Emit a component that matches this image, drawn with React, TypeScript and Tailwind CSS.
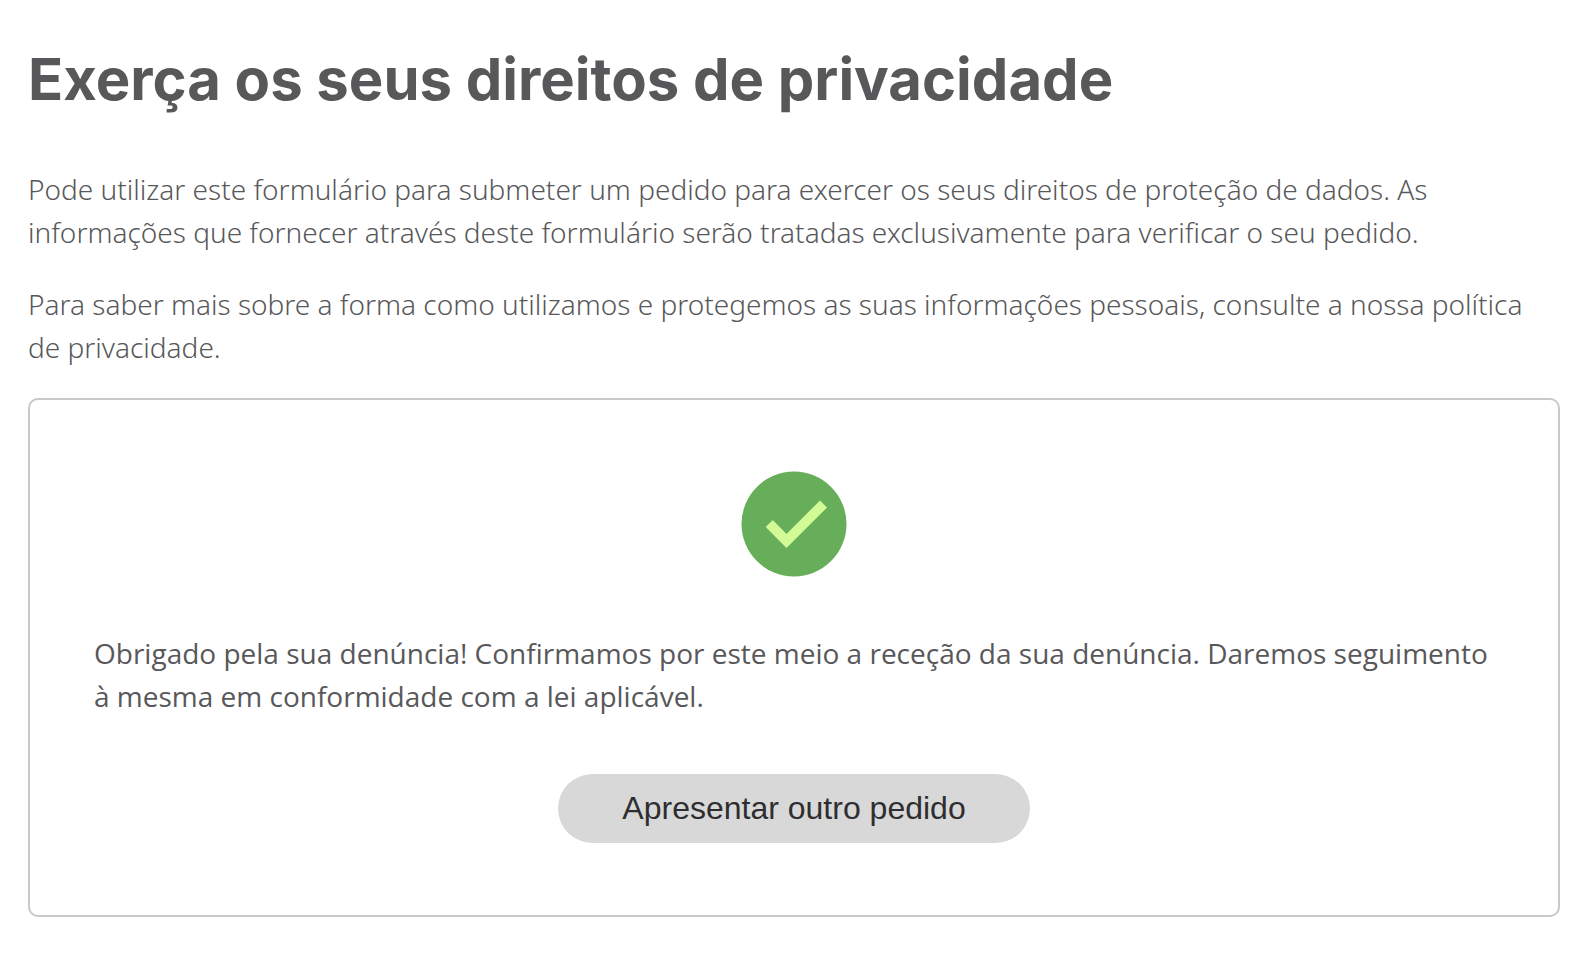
function CheckBadge() {
    return (
        <svg className="size-[106px]" viewBox="0 0 106 106" role="img" aria-label="Sucesso">
            <circle cx="53" cy="53" r="52.5" fill="#67ae5b" />
            <path d="M28.2 52.5 L45.5 70 L82.5 33" fill="none" stroke="#d2fb96" strokeWidth="10" />
        </svg>
    );
}

export default function App() {
    return (
        <main className="px-7 pt-11 pb-16 font-['Open_Sans',sans-serif] text-[#58585a]">
            <h1 className="font-[Inter,sans-serif] text-[58px] leading-[70px] font-bold">
                Exerça os seus direitos de privacidade
            </h1>
            <div className="mt-[54px] space-y-[29px] font-['Noto_Sans',sans-serif] text-[28px] leading-[43px] font-[350]">
                <p>
                    Pode utilizar este formulário para submeter um pedido para exercer os seus direitos de proteção de dados. As
                    informações que fornecer através deste formulário serão tratadas exclusivamente para verificar o seu pedido.
                </p>
                <p>
                    Para saber mais sobre a forma como utilizamos e protegemos as suas informações pessoais, consulte a nossa política
                    {" "}de&nbsp;privacidade.
                </p>
            </div>
            <section className="mt-[29px] flex flex-col items-center rounded-[10px] border-2 border-[#c9c9c9] px-16 pt-[71px] pb-[72px]">
                <CheckBadge />
                <p className="mt-[55px] w-full text-[28px] leading-[43px]">
                    Obrigado pela sua denúncia! Confirmamos por este meio a receção da sua denúncia. Daremos seguimento
                    à mesma em conformidade com a lei aplicável.
                </p>
                <button
                    type="button"
                    className="mt-14 h-[69px] rounded-full bg-[#d8d8d8] px-16 pb-0.5 font-['Liberation_Sans',sans-serif] text-[32px] text-[#2e2e30]"
                >
                    Apresentar outro pedido
                </button>
            </section>
        </main>
    );
}
